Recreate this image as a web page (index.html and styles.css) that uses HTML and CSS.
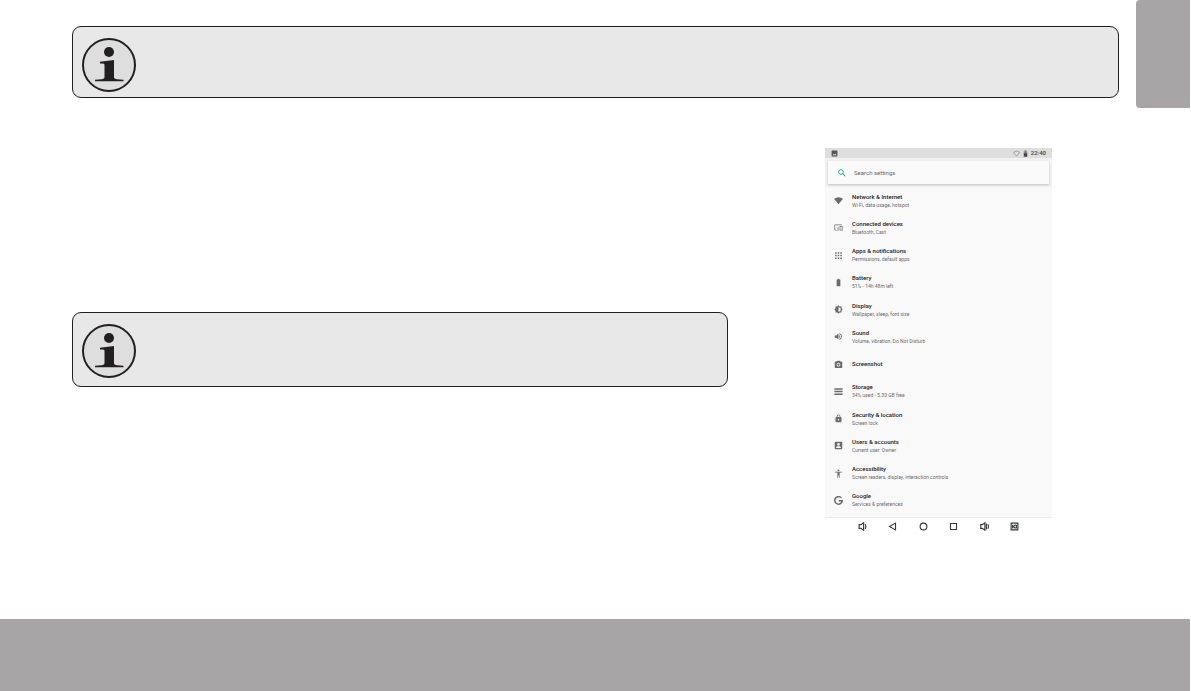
FILE: index.html
```html
<!DOCTYPE html>
<html lang="en">
<head>
  <meta charset="UTF-8" />
  <meta name="viewport" content="width=device-width, initial-scale=1.0"/>
  <title>Settings</title>
  <link rel="stylesheet" href="styles.css">
</head>
<body>

  <svg class="defs" width="0" height="0" aria-hidden="true">
    <symbol id="info" viewBox="0 0 54 54">
      <circle cx="27" cy="27" r="26" fill="#dededf" stroke="#231f20" stroke-width="2"/>
      <circle cx="27" cy="14" r="5" fill="#231f20"/>
      <path fill="#231f20" d="M18 23.800L32 22v17q0 2 3 2.300l6.500.4v1.500H13v-1.500l6.500-.4q3-.3 3-2.300V26.500q0-1.500-4.500-1z"/>
    </symbol>
  </svg>

  <header class="top">
    <div class="note note-wide">
      <svg class="note-icon"><use href="#info"/></svg>
    </div>
    <div class="tab"></div>
  </header>

  <main class="content">
    <div class="text-column">
      <div class="note">
        <svg class="note-icon"><use href="#info"/></svg>
      </div>
    </div>

    <section class="device">
      <div class="status-bar">
        <svg class="status-icon" viewBox="0 0 24 24" fill="#555"><path d="M22 20V4c0-1.100-.9-2-2-2H4c-1.100 0-2 .9-2 2v16c0 1.100.9 2 2 2h16c1.100 0 2-.9 2-2zM8.500 13.500l2.500 3 3.500-4.500 4.500 6H5z"/></svg>
        <div class="status-right">
          <svg class="status-icon" viewBox="0 0 24 24" fill="none" stroke="#999" stroke-width="3"><path d="M1 8Q12-1 23 8L12 21z"/></svg>
          <svg class="status-icon" viewBox="0 0 24 24"><path fill="#888" d="M9 1h6v3h3v8H6V4h3z"/><path fill="#444" d="M6 11h12v12H6z"/></svg>
          <span>22:40</span>
        </div>
      </div>

      <div class="search-area">
        <label class="search">
          <svg class="search-icon" viewBox="0 0 24 24" fill="#159a88"><path d="M15.500 14h-.8l-.3-.3A6.500 6.500 0 1 0 13.700 14.400l.3.300v.8l5 5 1.500-1.500zm-6 0a4.500 4.500 0 1 1 0-9 4.500 4.500 0 0 1 0 9z"/></svg>
          <input class="search-input" type="text" placeholder="Search settings" aria-label="Search settings">
        </label>
      </div>

      <nav class="settings">
        <a class="item" href="#">
          <svg class="icon" viewBox="0 0 24 24"><path d="M0 7.500Q12-1.500 24 7.500L12 22z"/></svg>
          <span><b>Network &amp; Internet</b><small>Wi-Fi, data usage, hotspot</small></span>
        </a>
        <a class="item" href="#">
          <svg class="icon" viewBox="0 0 24 24"><path d="M3 6h18V4H3c-1.100 0-2 .9-2 2v12c0 1.100.9 2 2 2h4v-2H3V6zm10 6H9v8h4v-8zm-1 6.500h-2v-5h2v5zM22 8h-6c-.5 0-1 .5-1 1v10c0 .5.5 1 1 1h6c.5 0 1-.5 1-1V9c0-.5-.5-1-1-1zm-1 10h-4v-8h4v8z"/></svg>
          <span><b>Connected devices</b><small>Bluetooth, Cast</small></span>
        </a>
        <a class="item" href="#">
          <svg class="icon" viewBox="0 0 24 24"><path d="M3 3h4v4H3zM10 3h4v4h-4zM17 3h4v4h-4zM3 10h4v4H3zM10 10h4v4h-4zM17 10h4v4h-4zM3 17h4v4H3zM10 17h4v4h-4zM17 17h4v4h-4z"/></svg>
          <span><b>Apps &amp; notifications</b><small>Permissions, default apps</small></span>
        </a>
        <a class="item" href="#">
          <svg class="icon" viewBox="0 0 24 24"><path d="M15.700 4H14V2h-4v2H8.300C7.600 4 7 4.600 7 5.300v15.400c0 .7.600 1.300 1.300 1.300h7.400c.7 0 1.300-.6 1.300-1.300V5.300c0-.7-.6-1.300-1.300-1.300z"/></svg>
          <span><b>Battery</b><small>51% - 14h 48m left</small></span>
        </a>
        <a class="item" href="#">
          <svg class="icon" viewBox="0 0 24 24"><path fill-rule="evenodd" d="M20 15.300L23.300 12 20 8.700V4h-4.700L12 .7 8.700 4H4v4.700L.7 12 4 15.300V20h4.700l3.300 3.300 3.300-3.300H20zM12 18V6a6 6 0 0 1 0 12z"/></svg>
          <span><b>Display</b><small>Wallpaper, sleep, font size</small></span>
        </a>
        <a class="item" href="#">
          <svg class="icon" viewBox="0 0 24 24"><path d="M2 9v6h4l6 5V4L6 9zM14 8v8q2.500-1.200 2.500-4T14 8zM14 3.200v2.100a7 7 0 0 1 0 13.400v2.100a9 9 0 0 0 0-17.600z"/></svg>
          <span><b>Sound</b><small>Volume, vibration, Do Not Disturb</small></span>
        </a>
        <a class="item" href="#">
          <svg class="icon" viewBox="0 0 24 24"><path fill-rule="evenodd" d="M9 2L7.200 4H4c-1.100 0-2 .9-2 2v13c0 1.100.9 2 2 2h16c1.100 0 2-.9 2-2V6c0-1.100-.9-2-2-2h-3.200L15 2zM12 7.500a5 5 0 1 1 0 10 5 5 0 0 1 0-10z"/><circle cx="12" cy="12.500" r="3"/></svg>
          <span><b>Screenshot</b></span>
        </a>
        <a class="item" href="#">
          <svg class="icon" viewBox="0 0 24 24"><path d="M1 3h22v4H1zM1 10h22v4H1zM1 17h22v4H1z"/></svg>
          <span><b>Storage</b><small>34% used - 5.30 GB free</small></span>
        </a>
        <a class="item" href="#">
          <svg class="icon" viewBox="0 0 24 24"><path fill-rule="evenodd" d="M18 8h-1V6A5 5 0 0 0 7 6v2H6c-1.100 0-2 .9-2 2v10c0 1.100.9 2 2 2h12c1.100 0 2-.9 2-2V10c0-1.100-.9-2-2-2zM12 13a2 2 0 1 1 0 4 2 2 0 0 1 0-4zM9 8V6a3 3 0 0 1 6 0v2z"/></svg>
          <span><b>Security &amp; location</b><small>Screen lock</small></span>
        </a>
        <a class="item" href="#">
          <svg class="icon" viewBox="0 0 24 24"><path fill-rule="evenodd" d="M4 2h16c1.100 0 2 .9 2 2v16c0 1.100-.9 2-2 2H4c-1.100 0-2-.9-2-2V4c0-1.100.9-2 2-2zM12 5.500a3.500 3.500 0 1 0 0 7 3.500 3.500 0 0 0 0-7zM5.500 18.500h13V17c0-2-4-3.200-6.500-3.200S5.500 15 5.500 17z"/></svg>
          <span><b>Users &amp; accounts</b><small>Current user: Owner</small></span>
        </a>
        <a class="item" href="#">
          <svg class="icon" viewBox="0 0 24 24"><circle cx="12" cy="3.500" r="2.500"/><path d="M22 9h-7v14h-2v-6h-2v6H9V9H2V7h20z"/></svg>
          <span><b>Accessibility</b><small>Screen readers, display, interaction controls</small></span>
        </a>
        <a class="item" href="#">
          <svg class="icon" viewBox="0 0 24 24"><path fill="none" stroke="#6b6b6b" stroke-width="4" d="M19.500 5A10 10 0 1 0 22 12.500H12.500"/></svg>
          <span><b>Google</b><small>Services &amp; preferences</small></span>
        </a>
      </nav>

      <div class="nav-bar">
        <button class="nav-button" aria-label="Volume down"><svg viewBox="0 0 24 24"><path d="M3 7v10h5l7 5V2L8 7zM19 6q4 6 0 12"/></svg></button>
        <button class="nav-button" aria-label="Back"><svg viewBox="0 0 24 24"><path d="M20 3v18L4 12z"/></svg></button>
        <button class="nav-button" aria-label="Home"><svg viewBox="0 0 24 24"><circle cx="12" cy="12" r="9"/></svg></button>
        <button class="nav-button" aria-label="Recent apps"><svg viewBox="0 0 24 24"><path d="M4 4h16v16H4z"/></svg></button>
        <button class="nav-button" aria-label="Volume up"><svg viewBox="0 0 24 24"><path d="M2 7v10h4l7 5V2L6 7zM17 4v16M21 6q3 6 0 12"/></svg></button>
        <button class="nav-button" aria-label="Screenshot"><svg viewBox="0 0 24 24"><path d="M3 3h18v18H3zM7 7v10M16 8q-6 0-6 4t6 4M17 7v10"/></svg></button>
      </div>
    </section>
  </main>

  <footer class="bottom"></footer>

</body>
</html>
```

FILE: styles.css
```css
* {
  box-sizing: border-box;
}

body {
  margin: 0;
  min-height: 100vh;
  display: flex;
  flex-direction: column;
  background: #fff;
  font-family: Roboto, sans-serif;
}

svg {
  display: block;
  flex: none;
}

.defs {
  position: absolute;
}

.top {
  display: flex;
  align-items: flex-start;
  gap: 17px;
  padding: 0 1px 0 72px;
}

.note {
  flex: 1;
  padding: 11px 9px 8px;
  border: 1px solid #231f20;
  border-radius: 9px;
  background: #e8e8e8;
}

.note-wide {
  margin-top: 26px;
  padding-bottom: 5px;
}

.note-icon {
  width: 54px;
  height: 54px;
}

.tab {
  width: 54px;
  height: 108px;
  border-radius: 4px 0 0 4px;
  background: #a7a5a6;
}

.content {
  flex: 1;
  display: flex;
  align-items: flex-start;
  gap: 97px;
  padding: 40px 139px 40px 72px;
}

.text-column {
  flex: 1;
  padding-top: 164px;
}

.device {
  width: 227px;
  background: #f9f9f9;
  color: #212121;
}

.status-bar {
  display: flex;
  justify-content: space-between;
  align-items: center;
  height: 10px;
  padding: 0 6px;
  background: #dedede;
  font-size: 6px;
  font-weight: 500;
  line-height: 10px;
  color: #444;
}

.status-right {
  display: flex;
  align-items: center;
  gap: 2px;
}

.status-icon {
  width: 7px;
  height: 7px;
}

.search-area {
  padding: 3px;
  background: #f1f1f1;
}

.search {
  display: flex;
  align-items: center;
  gap: 7px;
  height: 23px;
  padding: 0 9px;
  background: #fafafa;
  box-shadow: 0 1px 2px rgba(0, 0, 0, 0.2);
}

.search-icon {
  width: 10px;
  height: 10px;
}

.search-input {
  flex: 1;
  min-width: 0;
  padding: 0;
  border: 0;
  outline: 0;
  background: none;
  font: 6px/10px Roboto, sans-serif;
  color: #212121;
}

.search-input::placeholder {
  color: #666;
}

/* twelve equal rows */
.settings {
  display: grid;
  grid-auto-rows: 1fr;
  height: 327px;
}

.item {
  display: flex;
  align-items: center;
  gap: 9px;
  padding-left: 9px;
  color: inherit;
  text-decoration: none;
}

.item b,
.item small {
  display: block;
  line-height: 8px;
}

.item b {
  font-size: 6px;
  font-weight: 500;
}

.item small {
  font-size: 5px;
  color: #6b6b6b;
}

.icon {
  width: 9px;
  height: 9px;
  fill: #6b6b6b;
}

.nav-bar {
  display: flex;
  justify-content: space-between;
  margin-top: 3px;
  padding: 4px 33px;
  border-top: 1px solid #eee;
  background: #fff;
}

.nav-button {
  padding: 0;
  border: 0;
  background: none;
}

.nav-button svg {
  width: 9px;
  height: 9px;
  fill: none;
  stroke: #37393c;
  stroke-width: 3;
}

.bottom {
  height: 72px;
  margin-right: 1px;
  background: #a7a5a6;
}
```
